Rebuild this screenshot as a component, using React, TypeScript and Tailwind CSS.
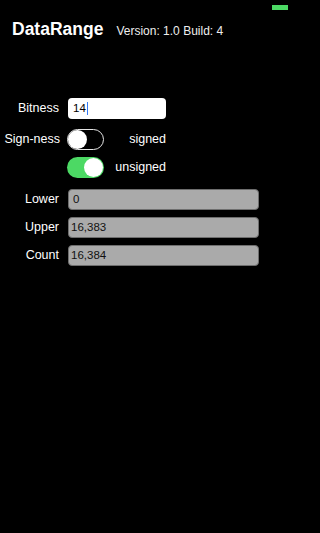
const font = { fontFamily: "'Liberation Sans', Arial, sans-serif" };

function Toggle({ on }: { on: boolean }) {
  return (
    <div
      className={`relative w-[37px] h-[21px] rounded-full ${
        on ? "bg-[#4cd964]" : "bg-black border border-[#e5e5e5]"
      }`}
    >
      <div
        className={`absolute w-[19px] h-[19px] rounded-full bg-white ${
          on ? "top-[1px] right-[1px]" : "top-0 left-0"
        }`}
      />
    </div>
  );
}

function ReadOnlyRow({ label, value, pad }: { label: string; value: string; pad: string }) {
  return (
    <div className="flex items-center">
      <div className="w-[59px] text-right text-[12.5px] text-white whitespace-nowrap">{label}</div>
      <div
        className={`ml-[9px] w-[191px] h-[21px] rounded-[4px] bg-[#aaaaaa] border border-[#6e6e6e] flex items-center ${pad} text-[11.5px] text-[#111]`}
      >
        {value}
      </div>
    </div>
  );
}

export default function App() {
  return (
    <div className="w-full min-h-screen bg-black">
      <div className="w-[300px] h-[533px] bg-black text-white overflow-hidden" style={font}>
        <div className="flex justify-end pt-[5px] pr-[12px]">
          <div className="w-[16px] h-[5px] bg-[#4cd964]" />
        </div>
        <div className="flex items-baseline pl-[12px] mt-[6px] whitespace-nowrap">
          <span className="text-[17.5px] font-bold">DataRange</span>
          <span className="ml-[13px] text-[12px] text-[#eee]">Version: 1.0 Build: 4</span>
        </div>

        <div className="mt-[56px] flex flex-col">
          <div className="flex items-center">
            <div className="w-[59px] text-right text-[12.5px] whitespace-nowrap">Bitness</div>
            <div className="ml-[9px] w-[98px] h-[21px] rounded-[4px] bg-white flex items-center px-[5px] text-[11.5px] text-black">
              14<span className="w-[1px] h-[13px] bg-[#3478f6] ml-[1px]" />
            </div>
          </div>

          <div className="flex items-center mt-[10px]">
            <div className="w-[60px] text-right text-[12.5px] whitespace-nowrap">Sign-ness</div>
            <div className="ml-[7px]">
              <Toggle on={false} />
            </div>
            <div className="w-[62px] text-right text-[12.5px] whitespace-nowrap">signed</div>
          </div>

          <div className="flex items-center mt-[7px]">
            <div className="ml-[67px]">
              <Toggle on={true} />
            </div>
            <div className="w-[62px] text-right text-[12.5px] whitespace-nowrap">unsigned</div>
          </div>

          <div className="flex flex-col gap-[7px] mt-[11px]">
            <ReadOnlyRow label="Lower" value="0" pad="px-[4px]" />
            <ReadOnlyRow label="Upper" value="16,383" pad="px-[2px]" />
            <ReadOnlyRow label="Count" value="16,384" pad="px-[2px]" />
          </div>
        </div>
      </div>
    </div>
  );
}
